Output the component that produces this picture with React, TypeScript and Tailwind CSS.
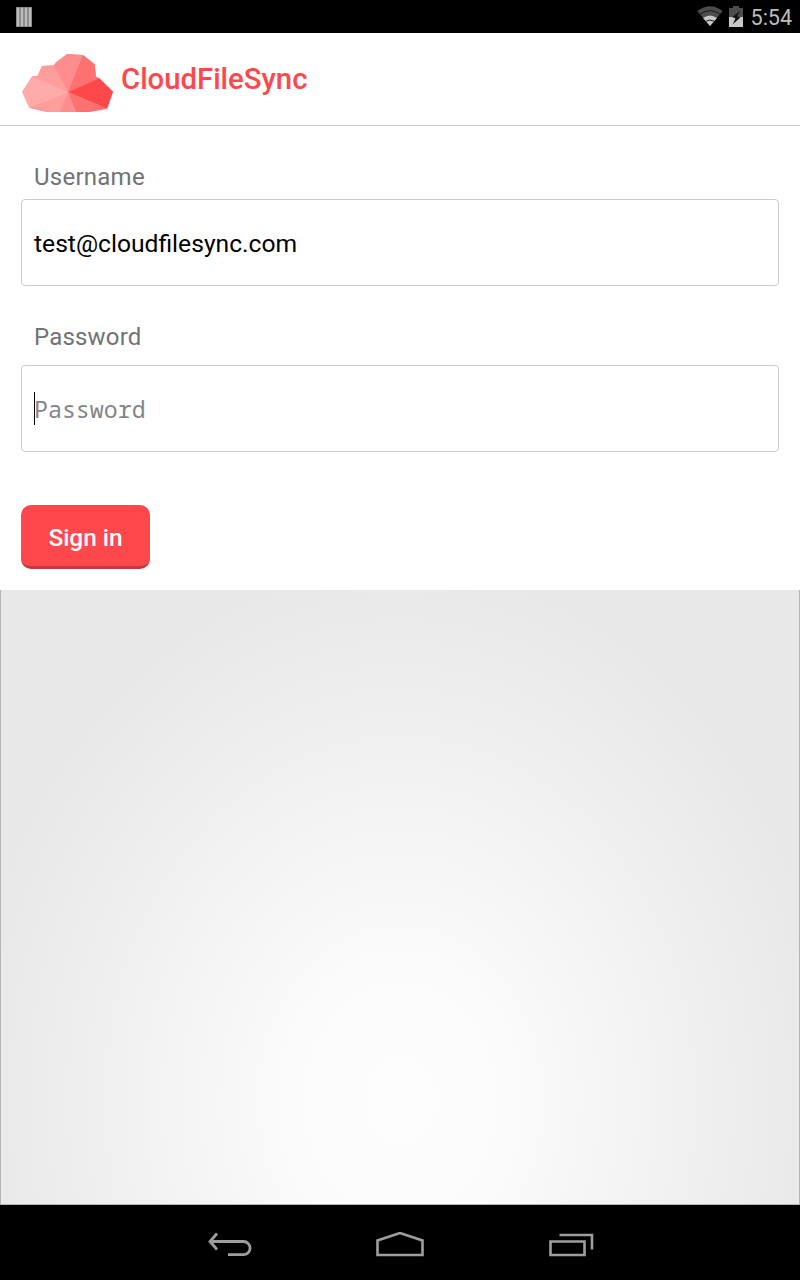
import React from "react";

function StatusBar() {
  return (
    <header className="flex h-[33px] shrink-0 items-center bg-black">
      <svg className="ml-4 h-5 w-4" viewBox="0 0 16 20">
        <rect width="16" height="20" fill="#707070" />
        <path d="M0.6 0.6h2.8v18.8H0.6zM4.6 0.6h2.8v18.8H4.6zM8.6 0.6h2.8v18.8H8.6zM12.6 0.6h2.8v18.8h-2.8z" fill="#bcbcbc" />
      </svg>
      <svg className="-mt-px ml-auto h-5 w-[26px]" viewBox="0 0 26 20">
        <path d="M0.3 5Q13 -4.5 25.7 5L13 20Z" fill="#4c4c4c" />
        <path d="M6 12Q13 7 20 12L13 20Z" fill="#c8c8c8" />
        <path d="M3 8.2Q13 1 23 8.2" fill="none" stroke="#111" strokeWidth="0.9" />
        <path d="M9 15.2Q13 12.8 17 15.2" fill="none" stroke="#222" strokeWidth="1" />
      </svg>
      <svg className="-mt-px ml-[6px] h-[21px] w-[14px]" viewBox="0 0 14 21">
        <path d="M4 0h6v2h4v9H0V2h4Z" fill="#4c4c4c" />
        <path d="M0 11h14v10H0Z" fill="#c8c8c8" />
        <path d="M11.2 4.8L3.2 11.3L6.5 12.3L3.8 18.2L11.4 11.4L8 10.3Z" fill="#111" />
      </svg>
      <span className="ml-[7.5px] mr-2 mt-[3px] w-[41.5px] whitespace-nowrap text-[21.6px] leading-6 text-[#bdbdbd]">5:54</span>
    </header>
  );
}

function CloudLogo() {
  return (
    <svg className="mt-2 h-[59px] w-[92px]" viewBox="36 42 276 177">
      <path d="M174 156L36 156L67 109L83 107L96 78L132 76L136 69L171 42L219 45L254 73L258 110L268 115L309 155L291 206L237 216H110L57 203Z" fill="#ff9696" />
      <path d="M174 156L57 203L36 156L67 109Z" fill="#ffabab" />
      <path d="M174 156L67 109L83 107L96 78L132 76Z" fill="#ff9d9d" />
      <path d="M174 156L132 76L136 69L171 42L219 45Z" fill="#ff8d8d" />
      <path d="M174 156L219 45L254 73L258 110L268 115Z" fill="#ff7071" />
      <path d="M174 156L268 115L309 155L291 206Z" fill="#ff484a" />
      <path d="M174 156L291 206L237 216H198Z" fill="#ff7071" />
      <path d="M174 156L198 216H150Z" fill="#ff8d8d" />
      <path d="M174 156L150 216H110L57 203Z" fill="#ff9d9d" />
    </svg>
  );
}

function NavigationBar() {
  return (
    <nav className="flex h-[75px] shrink-0 items-center bg-black pl-[208px] pt-1">
      <svg className="h-[26px] w-[45px]" viewBox="0 0 45 26" fill="none" stroke="#9e9e9e" strokeWidth="2.8">
        <path d="M9 1.5L2 9.5L9 17.5M2 9.5H35.5a6.6 6.6 0 0 1 0 13.2H20" />
      </svg>
      <svg className="ml-[123px] h-[26px] w-12" viewBox="0 0 48 26" fill="none" stroke="#9e9e9e" strokeWidth="2.6">
        <path d="M1.5 23V8.5L24 1L46.5 8.5V23Z" />
      </svg>
      <svg className="ml-[125px] h-[26px] w-[45px]" viewBox="0 0 45 26" fill="none" stroke="#9e9e9e" strokeWidth="2.6">
        <path d="M1.5 9.5H35.5V23H1.5ZM10.5 3H43V17.5" />
      </svg>
    </nav>
  );
}

export default function App() {
  return (
    <div className="flex h-[1280px] w-[800px] flex-col overflow-hidden bg-white font-['Roboto',sans-serif]">
      <StatusBar />
      <div className="flex h-[93px] shrink-0 items-center border-b border-[#cccccc] pl-[22px]">
        <CloudLogo />
        <h1 className="mb-[1px] ml-[7px] whitespace-nowrap text-[29.3px] font-medium leading-9 text-[#ff484c]">CloudFileSync</h1>
      </div>
      <main className="flex h-[464px] shrink-0 flex-col items-start px-[21px] pt-[35px] text-2xl">
        <label htmlFor="username" className="ml-[13px] h-[38px] leading-8 tracking-[0.25px] text-[#727272]">Username</label>
        <input id="username" defaultValue="test@cloudfilesync.com" className="h-[87px] w-full rounded-[4px] border border-[#cccccc] px-3 pb-0 pt-[2px] text-[24.65px] text-black outline-none" />
        <label htmlFor="password" className="ml-[13px] mt-[35px] h-[44px] leading-8 tracking-[0.18px] text-[#727272]">Password</label>
        <div className="flex h-[87px] w-full items-center rounded-[4px] border border-[#cccccc] pl-3">
          <span className="-mt-px h-[33px] w-px bg-black" />
          <input id="password" type="password" placeholder="Password" className="-ml-px h-full flex-1 font-['Noto_Sans_Mono','DejaVu_Sans_Mono',monospace] text-[23.25px] text-black outline-none placeholder:text-[#858585]" />
        </div>
        <button className="mt-[53px] h-16 w-[129px] rounded-[10px] border-b-[3px] border-[#c5393d] bg-[#ff484c] pt-[6px] text-[24.4px] font-medium text-white">Sign in</button>
      </main>
      <section className="flex-1 border-x border-b border-[#b5b5b5] bg-[radial-gradient(ellipse_430px_530px_at_50%_83%,#fdfdfd_0%,#fbfbfb_25%,#e8e8e8_100%)]" />
      <NavigationBar />
    </div>
  );
}
